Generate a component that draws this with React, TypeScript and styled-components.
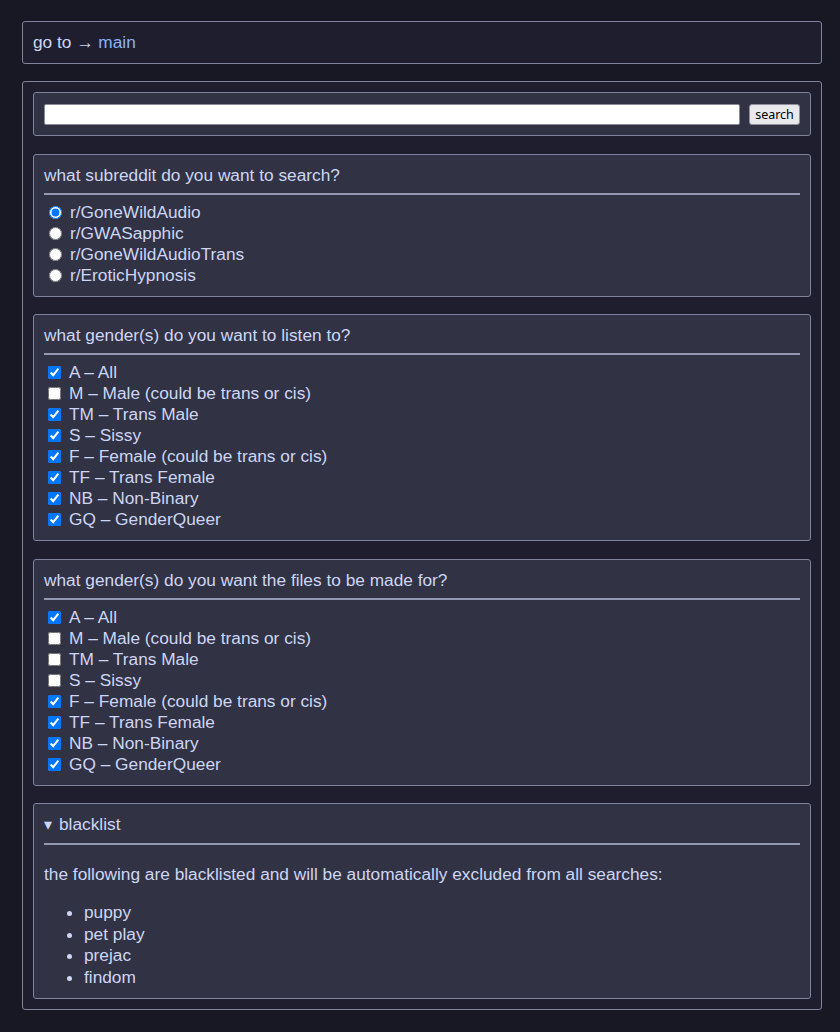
import React from 'react'
import styled, { createGlobalStyle } from 'styled-components'

const GlobalStyle = createGlobalStyle`
  html, body {
    margin: 0;
    background: #181825;
  }
  body {
    color: #cdd6f4;
    font-family: "Liberation Sans", Arial, sans-serif;
    font-size: 17.3px;
  }
`

const Page = styled.div`
  padding: 21px 18px 24px 22px;
  display: flex;
  flex-direction: column;
  gap: 17px;
`

const Outer = styled.div`
  width: 800px;
  box-sizing: border-box;
  background: #1e1e2e;
  border: 1px solid #7f849c;
  border-radius: 3px;
  padding: 10px;
  display: flex;
  flex-direction: column;
  gap: 17.5px;
`

const NavLine = styled.div`
  line-height: 21px;
`

const Link = styled.a`
  color: #89b4fa;
  text-decoration: none;
`

const Panel = styled.div`
  background: #313244;
  border: 1px solid #7f849c;
  border-radius: 3px;
  padding: 10px;
`

const SearchRow = styled.form`
  display: flex;
  align-items: center;
  gap: 9px;
  height: 22px;
`

const SearchInput = styled.input`
  flex: 1;
  height: 21px;
  box-sizing: border-box;
  border: 1px solid #8a8a9a;
  border-radius: 2px;
  background: #fff;
  padding: 1px 2px;
  margin: 0;
`

const SearchButton = styled.button`
  width: 51px;
  height: 21px;
  box-sizing: border-box;
  margin: 0;
  padding: 0;
  font-family: "Noto Sans", sans-serif;
  font-size: 12.5px;
  color: #000;
  background: #e9e9ed;
  border: 1px solid #8f8f9d;
  border-radius: 3px;
  line-height: 19px;
`

const Title = styled.div`
  line-height: 21px;
  padding-bottom: 7px;
  border-bottom: 2px solid #9399b2;
  margin-bottom: 7px;
`

const Option = styled.label`
  display: block;
  height: 21px;
  line-height: 21px;
  white-space: nowrap;
`

const Radio = styled.input.attrs({ type: 'radio' })`
  margin: 0 8px 0 5px;
  vertical-align: -1px;
`

const Check = styled.input.attrs({ type: 'checkbox' })`
  margin: 0 8px 0 4px;
  vertical-align: -1px;
`

const Details = styled.details``

const Summary = styled.summary`
  list-style: none;
  line-height: 21px;
  padding-bottom: 8px;
  border-bottom: 2px solid #9399b2;
  cursor: pointer;
  &::-webkit-details-marker {
    display: none;
  }
`

const Marker = styled.span`
  display: inline-block;
  width: 15px;
  font-size: 16px;
`

const Note = styled.p`
  margin: 19px 0 18px;
  line-height: 20px;
`

const List = styled.ul`
  margin: 0;
  padding-left: 40px;
`

const Item = styled.li`
  line-height: 21.5px;
`

const subreddits = ['r/GoneWildAudio', 'r/GWASapphic', 'r/GoneWildAudioTrans', 'r/EroticHypnosis']

const genders = [
  'A – All',
  'M – Male (could be trans or cis)',
  'TM – Trans Male',
  'S – Sissy',
  'F – Female (could be trans or cis)',
  'TF – Trans Female',
  'NB – Non-Binary',
  'GQ – GenderQueer',
]

const listenChecked = [true, false, true, true, true, true, true, true]
const forChecked = [true, false, false, false, true, true, true, true]

const blacklist = ['puppy', 'pet play', 'prejac', 'findom']

const GenderPanel = ({ title, checked, name }: { title: string; checked: boolean[]; name: string }) => (
  <Panel>
    <Title>{title}</Title>
    {genders.map((g, i) => (
      <Option key={g}>
        <Check name={name} defaultChecked={checked[i]} />
        {g}
      </Option>
    ))}
  </Panel>
)

const App = () => {
  return (
    <>
      <GlobalStyle />
      <Page>
        <Outer>
          <NavLine>
            go to → <Link href="#">main</Link>
          </NavLine>
        </Outer>
        <Outer>
          <Panel>
            <SearchRow onSubmit={(e) => e.preventDefault()}>
              <SearchInput type="text" />
              <SearchButton type="submit">search</SearchButton>
            </SearchRow>
          </Panel>
          <Panel>
            <Title>what subreddit do you want to search?</Title>
            {subreddits.map((s, i) => (
              <Option key={s}>
                <Radio name="subreddit" defaultChecked={i === 0} />
                {s}
              </Option>
            ))}
          </Panel>
          <GenderPanel title="what gender(s) do you want to listen to?" checked={listenChecked} name="listen" />
          <GenderPanel title="what gender(s) do you want the files to be made for?" checked={forChecked} name="for" />
          <Panel>
            <Details open>
              <Summary>
                <Marker>▾</Marker>blacklist
              </Summary>
              <Note>the following are blacklisted and will be automatically excluded from all searches:</Note>
              <List>
                {blacklist.map((b) => (
                  <Item key={b}>{b}</Item>
                ))}
              </List>
            </Details>
          </Panel>
        </Outer>
      </Page>
    </>
  )
}

export default App
